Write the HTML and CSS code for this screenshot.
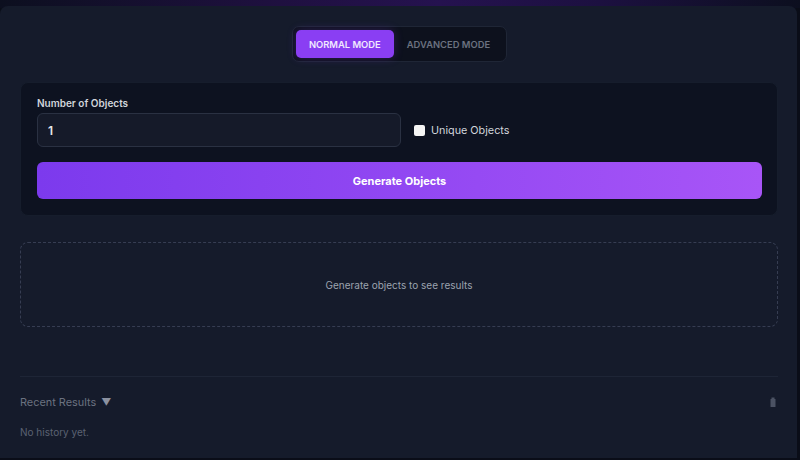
FILE: index.html
```html
<!DOCTYPE html>
<html>
<head>
<meta charset="utf-8">
<link rel="stylesheet" href="styles.css">
</head>
<body>
<div class="glow"></div>
<main class="panel">
  <div class="toggle-wrap">
    <div class="toggle">
      <button class="mode active">NORMAL MODE</button>
      <button class="mode">ADVANCED MODE</button>
    </div>
  </div>
  <section class="card">
    <label class="label">Number of Objects</label>
    <div class="row">
      <div class="input">1</div>
      <label class="check"><span class="box"></span>Unique Objects</label>
    </div>
    <button class="generate">Generate Objects</button>
  </section>
  <section class="results">Generate objects to see results</section>
  <hr class="divider">
  <div class="recent">
    <span class="recent-title">Recent Results <span class="tri">&#9660;</span></span>
    <svg class="trash" width="6" height="10" viewBox="0 0 6 10"><rect x="0.5" y="2" width="5" height="8" rx="0.5" fill="#4b5263"/><rect x="1.5" y="0.5" width="3" height="1.5" fill="#4b5263"/></svg>
  </div>
  <p class="empty">No history yet.</p>
</main>
</body>
</html>
```
FILE: styles.css
```css
* { box-sizing: border-box; }
html, body { margin: 0; padding: 0; }
body {
  width: 800px;
  height: 460px;
  overflow: hidden;
  background: #0a0d18;
  font-family: Inter, "Liberation Sans", sans-serif;
  position: relative;
  padding: 6px 3px 2px 0;
}
.glow {
  position: absolute;
  left: 0; top: 0; right: 0; height: 8px;
  background: linear-gradient(90deg, #0c0f1f 0%, #1f1040 35%, #25124f 55%, #1c1040 75%, #0c0f1f 100%);
}
.panel {
  position: relative;
  height: 452px;
  background: #151b2b;
  border-radius: 8px 8px 0 0;
  padding: 20px 19px 0 20px;
  display: flex;
  flex-direction: column;
}
.toggle-wrap { display: flex; justify-content: center; }
.toggle {
  display: flex;
  padding: 3px;
  background: #0d111d;
  border: 1px solid #1f2636;
  border-radius: 7px;
  margin-left: 1px;
}
.mode {
  border: none;
  background: transparent;
  font-family: inherit;
  font-size: 9.4px;
  font-weight: 600;
  letter-spacing: 0;
  color: #6b7280;
  height: 28px;
  padding: 0 13px;
  border-radius: 5px;
}
.mode.active {
  background: #8a3ef3;
  color: #f1e9ff;
  box-shadow: 0 0 10px rgba(138, 62, 243, 0.25);
}
.card {
  margin-top: 20px;
  background: #0d1220;
  border: 1px solid #161d2c;
  border-radius: 8px;
  padding: 14px 15px 16px 16px;
  display: flex;
  flex-direction: column;
}
.label {
  font-size: 10px;
  font-weight: 600;
  color: #d1d5db;
}
.row {
  display: flex;
  align-items: center;
  margin-top: 4px;
}
.input {
  width: 364px;
  height: 34px;
  background: #151a29;
  border: 1px solid #2a3142;
  border-radius: 6px;
  color: #e5e7eb;
  font-size: 12px;
  font-weight: 600;
  padding: 0 10px;
  display: flex;
  align-items: center;
}
.check {
  display: flex;
  align-items: center;
  margin-left: 13px;
  font-size: 10.8px;
  color: #d1d5db;
}
.box {
  width: 11px;
  height: 11px;
  background: #f5f5f5;
  border-radius: 2px;
  margin-right: 6px;
}
.generate {
  margin-top: 15px;
  height: 37px;
  border: none;
  border-radius: 6px;
  background: linear-gradient(90deg, #7c3aed 0%, #9147f2 50%, #a855f7 100%);
  color: #ffffff;
  font-family: inherit;
  font-size: 11px;
  font-weight: 700;
}
.results {
  margin-top: 26px;
  height: 85px;
  border: 1px dashed #363d52;
  border-radius: 8px;
  display: flex;
  align-items: center;
  justify-content: center;
  font-size: 10px;
  color: #9ca3af;
}
.divider {
  margin: 49px 0 0;
  border: none;
  border-top: 1px solid #1e2536;
}
.recent {
  display: flex;
  justify-content: space-between;
  align-items: center;
  margin-top: 18px;
}
.recent-title {
  font-size: 10.9px;
  color: #6b7280;
}
.tri { font-size: 10px; color: #8b91a0; margin-left: 2px; }
.trash { margin-right: 2px; }
.empty {
  margin: 17px 0 0;
  font-size: 10px;
  color: #5b6272;
}
```
